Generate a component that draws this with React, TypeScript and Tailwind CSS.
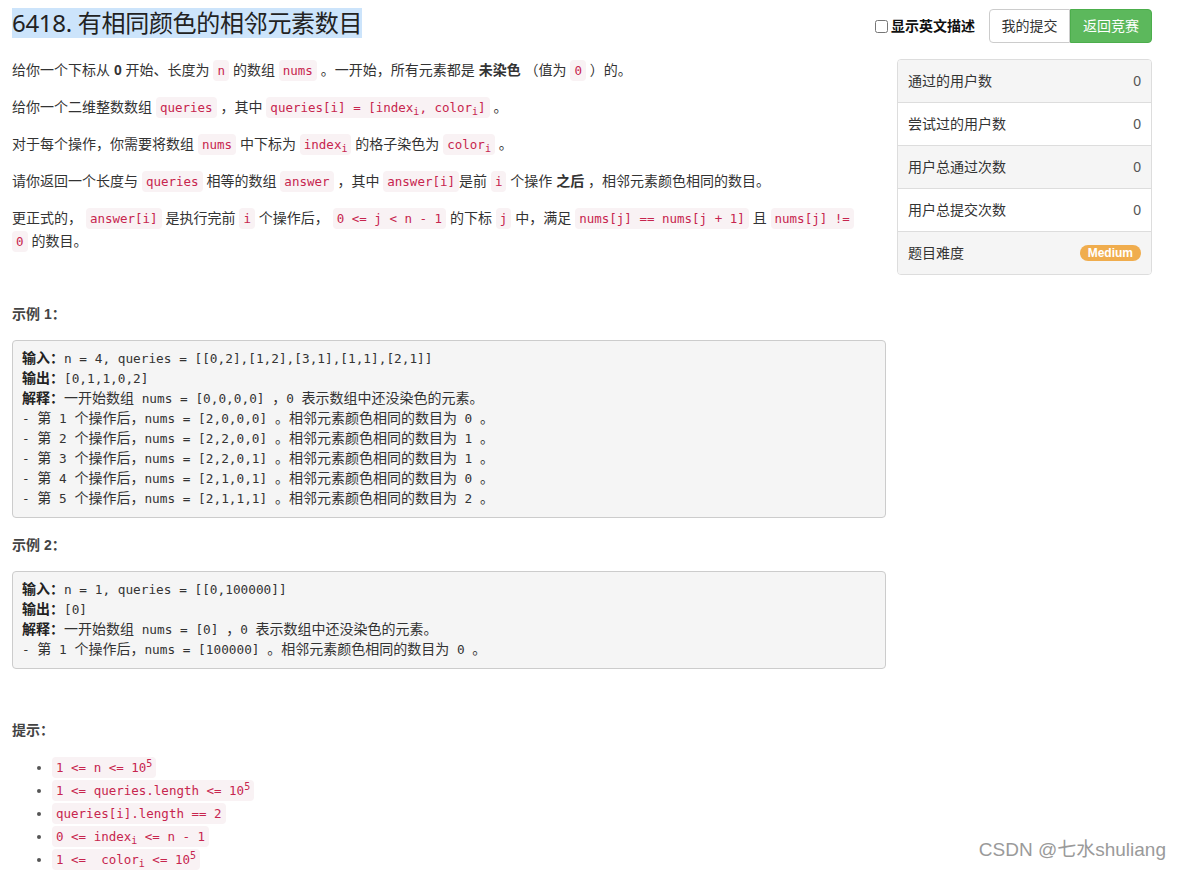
import React from 'react';

const mono = "font-['DejaVu_Sans_Mono','Liberation_Mono','Noto_Sans_CJK_SC',monospace]";

const C: React.FC<{ children: React.ReactNode }> = ({ children }) => (
  <code className={`${mono} text-[12.5px] leading-[14px] text-[#c7254e] bg-[#f9f2f4] rounded-[4px] px-[4px] py-[3px]`}>
    {children}
  </code>
);

const Sub = () => <span className="relative top-[3px] text-[10px] leading-none">i</span>;
const Sup5 = () => <span className="relative -top-[5px] text-[10px] leading-none">5</span>;

const B: React.FC<{ children: React.ReactNode }> = ({ children }) => (
  <b className="font-bold text-[#333]">{children}</b>
);

// split a pre line so the Chinese runs get the wider size the page shows
const cjk = /([\u3000-\u303f\u4e00-\u9fff\uff00-\uffef]+)/;
const PreLine: React.FC<{ text: string }> = ({ text }) => (
  <>
    {text.split(cjk).map((part, i) =>
      cjk.test(part) ? (
        <span key={i} className="font-['Noto_Sans_CJK_SC',sans-serif] text-[14px] leading-[14px]">{part}</span>
      ) : (
        <span key={i}>{part}</span>
      )
    )}
  </>
);

const Label: React.FC<{ children: React.ReactNode }> = ({ children }) => (
  <b className="font-['Noto_Sans_CJK_SC',sans-serif] text-[14px] leading-[14px] font-bold text-[#222]">{children}</b>
);

const stats = [
  { label: '通过的用户数', value: '0' },
  { label: '尝试过的用户数', value: '0' },
  { label: '用户总通过次数', value: '0' },
  { label: '用户总提交次数', value: '0' },
];

const example1 = [
  '- 第 1 个操作后，nums = [2,0,0,0] 。相邻元素颜色相同的数目为 0 。',
  '- 第 2 个操作后，nums = [2,2,0,0] 。相邻元素颜色相同的数目为 1 。',
  '- 第 3 个操作后，nums = [2,2,0,1] 。相邻元素颜色相同的数目为 1 。',
  '- 第 4 个操作后，nums = [2,1,0,1] 。相邻元素颜色相同的数目为 0 。',
  '- 第 5 个操作后，nums = [2,1,1,1] 。相邻元素颜色相同的数目为 2 。',
];

const preBox = `${mono} text-[12.75px] leading-[20px] text-[#333] bg-[#f5f5f5] border border-[#ccc] rounded-[4px] px-[9px] py-[8px] whitespace-pre`;

export default function App() {
  return (
    <div className="w-[1180px] h-[870px] bg-white px-[12px] text-[14px] text-[#333] font-['Liberation_Sans','Noto_Sans_CJK_SC',sans-serif] relative overflow-hidden">
      <div className="flex justify-between items-start pt-[8px] pr-[16px] h-[59px]">
        <h1 className="text-[24px] leading-[30px] text-[#222] bg-[#cce4fb] font-['Noto_Sans','Noto_Sans_CJK_SC',sans-serif] font-normal tracking-[-0.3px]">
          6418. 有相同颜色的相邻元素数目
        </h1>
        <div className="flex items-center pt-[1px]">
          <label className="flex items-center gap-[3px] font-bold text-[14px] text-[#111] mr-[14px]">
            <input type="checkbox" className="w-[13px] h-[13px]" />
            显示英文描述
          </label>
          <button className="h-[34px] w-[81px] text-[14px] text-[#333] bg-white border border-[#ccc] rounded-l-[4px]">我的提交</button>
          <button className="h-[34px] w-[82px] text-[14px] text-white bg-[#5cb85c] border border-[#4cae4c] rounded-r-[4px]">返回竞赛</button>
        </div>
      </div>

      <div className="flex items-start">
        <div className="w-[874px] leading-[23px]">
          <p className="mb-[14px]">
            给你一个下标从 <B>0</B> 开始、长度为 <C>n</C> 的数组 <C>nums</C> 。一开始，所有元素都是 <B>未染色</B> （值为 <C>0</C> ）的。
          </p>
          <p className="mb-[14px]">
            给你一个二维整数数组 <C>queries</C> ，其中 <C>queries[i] = [index<Sub />, color<Sub />]</C> 。
          </p>
          <p className="mb-[14px]">
            对于每个操作，你需要将数组 <C>nums</C> 中下标为 <C>index<Sub /></C> 的格子染色为 <C>color<Sub /></C> 。
          </p>
          <p className="mb-[14px]">
            请你返回一个长度与 <C>queries</C> 相等的数组 <C>answer</C> ，其中 <C>answer[i]</C>是前 <C>i</C> 个操作 <B>之后</B> ，相邻元素颜色相同的数目。
          </p>
          <p className="mb-[14px]">
            <span className="whitespace-nowrap">
              更正式的， <C>answer[i]</C> 是执行完前 <C>i</C> 个操作后， <C>0 &lt;= j &lt; n - 1</C> 的下标 <C>j</C> 中，满足 <C>nums[j] == nums[j + 1]</C> 且 <C>nums[j] !=</C>
            </span>
            <br />
            <C>0</C> 的数目。
          </p>

          <p className="mt-[50px] mb-[14px] font-bold text-[#444]">示例 1：</p>
          <pre className={preBox}>
            <Label>输入：</Label>n = 4, queries = [[0,2],[1,2],[3,1],[1,1],[2,1]]{'\n'}
            <Label>输出：</Label>[0,1,1,0,2]{'\n'}
            <Label>解释：</Label><PreLine text="一开始数组 nums = [0,0,0,0] ，0 表示数组中还没染色的元素。" />{'\n'}
            {example1.map((l, i) => (
              <React.Fragment key={i}>
                <PreLine text={l} />
                {i < example1.length - 1 ? '\n' : null}
              </React.Fragment>
            ))}
          </pre>

          <p className="mt-[16px] mb-[14px] font-bold text-[#444]">示例 2：</p>
          <pre className={preBox}>
            <Label>输入：</Label>n = 1, queries = [[0,100000]]{'\n'}
            <Label>输出：</Label>[0]{'\n'}
            <Label>解释：</Label><PreLine text="一开始数组 nums = [0] ，0 表示数组中还没染色的元素。" />{'\n'}
            <PreLine text="- 第 1 个操作后，nums = [100000] 。相邻元素颜色相同的数目为 0 。" />
          </pre>

          <p className="mt-[50px] mb-[14px] font-bold text-[#444]">提示：</p>
          <ul className="list-disc pl-[40px] marker:text-[#555]">
            <li><C>1 &lt;= n &lt;= 10<Sup5 /></C></li>
            <li><C>1 &lt;= queries.length &lt;= 10<Sup5 /></C></li>
            <li><C>queries[i].length == 2</C></li>
            <li><C>0 &lt;= index<Sub /> &lt;= n - 1</C></li>
            <li><C>1 &lt;=&nbsp; color<Sub /> &lt;= 10<Sup5 /></C></li>
          </ul>
        </div>

        <div className="ml-[11px] w-[255px] border border-[#ddd] rounded-[4px] overflow-hidden">
          {stats.map((s, i) => (
            <div
              key={s.label}
              className={`flex justify-between items-center h-[43px] px-[10px] border-b border-[#ddd] ${i % 2 === 0 ? 'bg-[#f5f5f5]' : 'bg-white'}`}
            >
              <span className="text-[#333]">{s.label}</span>
              <span className="text-[#555]">{s.value}</span>
            </div>
          ))}
          <div className="flex justify-between items-center h-[42px] px-[10px] bg-[#f5f5f5]">
            <span className="text-[#333]">题目难度</span>
            <span className="bg-[#f0ad4e] text-white text-[12px] font-bold rounded-full px-[8px] leading-[16px]">Medium</span>
          </div>
        </div>
      </div>

      <div className="absolute right-[14px] bottom-[6px] text-[19px] text-[#9a9a9a] font-['Liberation_Sans','Noto_Sans_CJK_SC',sans-serif]">
        CSDN @七水shuliang
      </div>
    </div>
  );
}
